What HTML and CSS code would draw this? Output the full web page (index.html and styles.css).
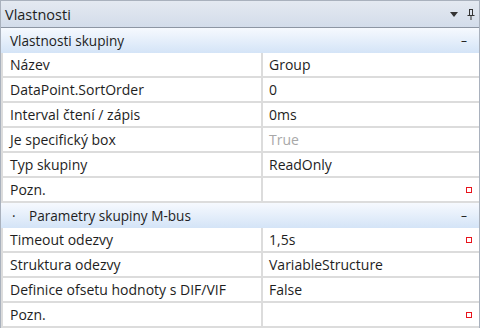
FILE: index.html
```html
<!DOCTYPE html>
<html lang="cs">
<head>
    <meta charset="UTF-8">
    <title>Vlastnosti</title>
    <link rel="stylesheet" href="styles.css">
</head>
<body>
    <div class="panel">
        <!-- Panel header -->
        <div class="panel-title">
            <span>Vlastnosti</span>
            <div class="title-icons">
                <svg width="8" height="5" viewBox="0 0 8 5"><path d="M0 0h8L4 5z" fill="#333"/></svg>
                <svg width="8" height="11" viewBox="0 0 8 11">
                    <path d="M2 0.5h4M2.5 0.5v6M5.5 0.5v6M0.5 6.5h7M4 6.5v4.5" stroke="#333" fill="none"/>
                </svg>
            </div>
        </div>

        <!-- Group 1 -->
        <div class="group-header">
            <span>Vlastnosti skupiny</span>
            <span class="collapse">–</span>
        </div>
        <div class="row"><div class="name">Název</div><div class="value">Group</div></div>
        <div class="row"><div class="name">DataPoint.SortOrder</div><div class="value">0</div></div>
        <div class="row"><div class="name">Interval čtení / zápis</div><div class="value">0ms</div></div>
        <div class="row"><div class="name">Je specifický box</div><div class="value readonly">True</div></div>
        <div class="row"><div class="name">Typ skupiny</div><div class="value">ReadOnly</div></div>
        <div class="row"><div class="name">Pozn.</div><div class="value"><span></span><i class="marker"></i></div></div>

        <!-- Group 2 -->
        <div class="group-header">
            <span><span class="bullet">·</span>Parametry skupiny M-bus</span>
            <span class="collapse">–</span>
        </div>
        <div class="row"><div class="name">Timeout odezvy</div><div class="value"><span>1,5s</span><i class="marker"></i></div></div>
        <div class="row"><div class="name">Struktura odezvy</div><div class="value">VariableStructure</div></div>
        <div class="row"><div class="name">Definice ofsetu hodnoty s DIF/VIF</div><div class="value">False</div></div>
        <div class="row"><div class="name">Pozn.</div><div class="value"><span></span><i class="marker"></i></div></div>
    </div>
</body>
</html>
```

FILE: styles.css
```css
body {
    margin: 0;
    font-family: "Open Sans", "Noto Sans", sans-serif;
    font-size: 14px;
    color: #1e1e1e;
    background: #ffffff;
}

.panel {
    width: 480px;
    height: 328px;
    box-sizing: border-box;
    border-left: 1px solid #a9b1bd;
    border-right: 1px solid #a9b1bd;
    overflow: hidden;
}

.panel-title {
    height: 28px;
    box-sizing: border-box;
    display: flex;
    align-items: center;
    justify-content: space-between;
    padding: 0 4px 0 4px;
    border-top: 1px solid #a9b1bd;
    border-bottom: 1px solid #8d96a3;
    background: linear-gradient(#e4e9f1, #d3dcea);
    font-size: 14.5px;
}

.title-icons {
    display: flex;
    align-items: center;
    gap: 9px;
}

.group-header {
    height: 25px;
    display: flex;
    align-items: center;
    justify-content: space-between;
    padding: 0 12px 0 9px;
    background: linear-gradient(#f6f9fe, #d4e4f7);
    font-size: 13.6px;
}

.bullet {
    display: inline-block;
    width: 17px;
    padding-left: 2px;
}

.collapse {
    font-size: 12px;
}

.row {
    height: 25px;
    box-sizing: border-box;
    display: flex;
    border-bottom: 2px solid #dcdcdc;
    border-left: 2px solid #dcdcdc;
}

.name {
    width: 260px;
    box-sizing: border-box;
    padding-left: 7px;
    display: flex;
    align-items: center;
    border-right: 2px solid #dcdcdc;
}

.value {
    flex: 1;
    padding: 0 7px 0 6px;
    display: flex;
    align-items: center;
    justify-content: space-between;
}

.readonly {
    color: #a8a8a8;
}

.marker {
    display: block;
    flex: none;
    width: 4px;
    height: 4px;
    border: 1px solid #e8141c;
    background: #ffffff;
}
```
